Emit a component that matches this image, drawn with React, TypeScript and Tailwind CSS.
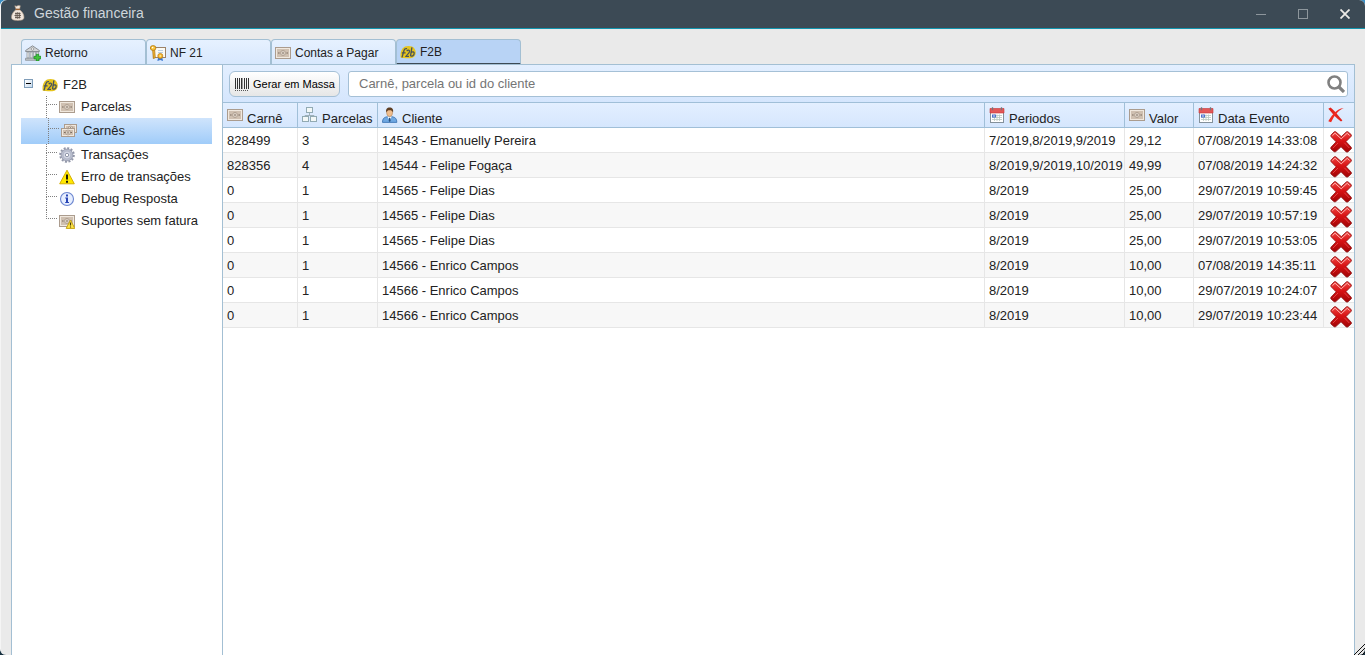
import React from "react";

type IconProps = { className?: string };

function Bill({ x, y, w, h }: { x: number; y: number; w: number; h: number }) {
  return (
    <g>
      <rect x={x + 0.5} y={y + 0.5} width={w - 1} height={h - 1} fill="#f0e8de" stroke="#ab9c8e" />
      <rect x={x + 2} y={y + 2} width={w - 4} height={h - 4} fill="#cfc0b1" />
      <ellipse cx={x + w / 2} cy={y + h / 2} rx="2.4" ry={Math.min(2.6, h / 3.6)} fill="#e4d9cd" stroke="#a09182" strokeWidth=".7" />
      <path d={`M${x + 3} ${y + h / 2}h1.6M${x + w - 4.6} ${y + h / 2}h1.6M${x + w / 2} ${y + h / 2 - 1.2}v2.4`} stroke="#7a6c60" />
    </g>
  );
}

function MoneyIcon({ className = "" }: IconProps) {
  return (
    <svg viewBox="0 0 16 16" className={`size-4 shrink-0 ${className}`} aria-hidden="true">
      <Bill x={0} y={2} w={16} h={12} />
    </svg>
  );
}

function MoneyStackIcon() {
  return (
    <svg viewBox="0 0 16 16" className="size-4 shrink-0" aria-hidden="true">
      <Bill x={3} y={1} w={13} h={9} />
      <Bill x={0} y={5} w={14} h={9} />
    </svg>
  );
}

function MoneyWarningIcon() {
  return (
    <svg viewBox="0 0 16 16" className="size-4 shrink-0" aria-hidden="true">
      <Bill x={0} y={2} w={16} h={12} />
      <path d="M11.5 7L15.8 15.4H7.2Z" fill="#ffe648" stroke="#c6a412" strokeLinejoin="round" />
      <path d="M11.5 9.5v3M11.5 13.4v1.2" stroke="#4a3c08" strokeWidth="1.2" />
    </svg>
  );
}

function F2bIcon() {
  return (
    <svg viewBox="0 0 16 16" className="size-4 shrink-0" aria-hidden="true">
      <path d="M2.5 4.5C4.5 1.8 9 1.4 12 2.6C15.2 4 16.5 8 15.3 10.9C14 14 10 14.5 6 14.2L.8 13.8C0 10 .8 7 2.5 4.5Z" fill="#e6c41c" />
      <path d="M2 13.4L4 6.5C4.4 5 5.3 4.4 7 4.7M1.8 8.9H5.6" fill="none" stroke="#47535c" strokeWidth="1.3" />
      <path d="M6.8 7.1C7.5 5.8 9.9 5.7 9.5 7.6C9.2 9.4 7 10.6 6 12.3H9" fill="none" stroke="#47535c" strokeWidth="1.2" />
      <path d="M11.9 3.4L10.5 12.2M11.2 8.4C12.6 7.2 14.6 7.9 14.1 9.8C13.7 11.8 11.8 12.6 10.6 11.9" fill="none" stroke="#47535c" strokeWidth="1.3" />
    </svg>
  );
}

function MoneyBagIcon() {
  return (
    <svg viewBox="0 0 16 16" className="size-4 shrink-0" aria-hidden="true">
      <path d="M4.8 .8L6.7 1.2L8.2 .4L10.3 .8L9.6 4.2H6.1Z" fill="#f3e9df" stroke="#b39c86" strokeWidth=".6" />
      <path d="M6 4.6C3.4 6.6 1.5 9.6 1.5 12C1.5 14.8 3.4 15.4 7.8 15.4S14 14.8 14 12C14 9.6 12.2 6.6 9.6 4.6Z" fill="#f0e6dc" stroke="#b39c86" strokeWidth=".6" />
      <path d="M5.6 4.4H10" stroke="#9c6233" strokeWidth="1.4" />
      <path d="M5 8.5h5.5M4.5 10.5h6.5M5 12.5h5.5M6 7.5v6M7.8 7v7M9.6 7.5v6" stroke="#62574e" strokeWidth=".9" />
    </svg>
  );
}

function BankIcon() {
  return (
    <svg viewBox="0 0 16 16" className="size-4 shrink-0" aria-hidden="true">
      <path d="M.6 5.5L7.5.8L14.4 5.5V6.5H.6Z" fill="#d3d6d8" stroke="#82878b" strokeWidth=".9" />
      <circle cx="7.5" cy="4" r="1.3" fill="#f1f3f4" stroke="#777" strokeWidth=".6" />
      <path d="M2 7h2v6H2zM5.2 7h2v6h-2zM8.4 7h2v6h-2zM11.6 7h2v6h-2z" fill="#eef0f1" stroke="#888d91" strokeWidth=".7" />
      <path d="M.5 13.3h14v2H.5z" fill="#c1c5c8" stroke="#82878b" strokeWidth=".7" />
      <path d="M11.3 9.3h2.4v2H16v2.5h-2.3V16h-2.4v-2.2H9v-2.5h2.3z" fill="#42c63a" stroke="#168a1e" strokeWidth=".7" />
    </svg>
  );
}

function CertificateIcon() {
  return (
    <svg viewBox="0 0 16 16" className="size-4 shrink-0" aria-hidden="true">
      <rect x="3.5" y="2.5" width="12" height="10" fill="#fbfaf4" stroke="#9c8268" />
      <path d="M8 5.5h5M8 7.5h5" stroke="#aac4dd" strokeWidth=".8" />
      <path d="M2.6 4.5L3.3 13.6L5.3 12.8L4.6 4.3" fill="#f1b533" stroke="#a96f0f" strokeWidth=".7" />
      <ellipse cx="3.1" cy="3" rx="2.8" ry="2.4" fill="#f8c53b" stroke="#b27612" strokeWidth=".8" />
      <circle cx="2.6" cy="2.6" r=".8" fill="#fff" />
      <path d="M8.2 12l-.8 4 2.8-1 2.8 1-.8-4z" fill="#3876d3" />
      <circle cx="10.3" cy="10.9" r="2.5" fill="#f5b931" stroke="#b87710" strokeWidth=".7" />
      <circle cx="10.3" cy="10.9" r=".9" fill="#ffe694" />
    </svg>
  );
}

function GearIcon() {
  return (
    <svg viewBox="0 0 16 16" className="size-4 shrink-0" aria-hidden="true">
      <circle cx="8" cy="8" r="6.8" fill="none" stroke="#9196a8" strokeWidth="2" strokeDasharray="2 1.56" />
      <circle cx="8" cy="8" r="5.9" fill="#b9bece" stroke="#9096a9" strokeWidth=".8" />
      <circle cx="8" cy="8" r="3.9" fill="#d5d9e6" stroke="#a2a8bb" strokeWidth=".6" />
      <circle cx="8" cy="8" r="1.7" fill="#fff" stroke="#878da2" strokeWidth=".9" />
    </svg>
  );
}

function WarningIcon() {
  return (
    <svg viewBox="0 0 16 16" className="size-4 shrink-0" aria-hidden="true">
      <path d="M8 1.2L15.3 14.8H.7Z" fill="#ffe800" stroke="#d5ad00" strokeLinejoin="round" />
      <path d="M8 5.5v5M8 11.7v2" stroke="#1c1a08" strokeWidth="2" />
    </svg>
  );
}

function InfoIcon() {
  return (
    <svg viewBox="0 0 16 16" className="size-4 shrink-0" aria-hidden="true">
      <circle cx="8" cy="8" r="6.5" fill="#e6eeff" stroke="#6b85cf" strokeWidth="1.1" />
      <path d="M7 3.5h2v2H7zM6.2 6.5H9V11h1v1H6.2v-1H7V7.5h-.8z" fill="#2946b5" />
    </svg>
  );
}

function TreeIcon() {
  return (
    <svg viewBox="0 0 16 16" className="size-4 shrink-0" aria-hidden="true">
      <path d="M7.5 5.5v3M3 10.5v-2h9v2" fill="none" stroke="#9fb1b9" />
      <g fill="#f3f8f7" stroke="#92aab3">
        <rect x="4.5" y=".5" width="6" height="5" />
        <rect x=".5" y="9.5" width="6" height="5" />
        <rect x="8.5" y="9.5" width="6" height="5" />
      </g>
    </svg>
  );
}

function UserIcon() {
  return (
    <svg viewBox="0 0 16 16" className="size-4 shrink-0" aria-hidden="true">
      <path d="M.5 15.4C.5 11.4 2.3 10.2 5.3 9.7H10C13 10.2 14.8 11.4 14.8 15.4Z" fill="#6fa8e2" stroke="#366fae" strokeWidth=".8" />
      <path d="M5.4 9.6L7.6 13L9.9 9.6Z" fill="#fff" />
      <path d="M7.1 10.7h1.1l.5 3.3-1 1-1-1z" fill="#2c527f" />
      <ellipse cx="7.6" cy="5.5" rx="3" ry="4" fill="#f0be8e" stroke="#a87444" strokeWidth=".5" />
      <path d="M4.2 5.5C3.6 2 5 .4 7.6.4S11.7 2 11 5.5C10.4 3.8 9.4 3.3 7.6 3.3S4.9 3.8 4.2 5.5Z" fill="#5e3d21" />
    </svg>
  );
}

function CalendarIcon() {
  return (
    <svg viewBox="0 0 16 16" className="size-4 shrink-0" aria-hidden="true">
      <rect x="1.5" y="2.5" width="13" height="13" fill="#fff" stroke="#84919b" />
      <path d="M1 1.5h14V6H1z" fill="#e45757" stroke="#c23838" strokeWidth=".6" />
      <path d="M3.5.3v3M12.5.3v3" stroke="#74767c" strokeWidth="1.3" />
      <path d="M3 8.5h10M3 10.5h10M3 12.5h10M5.5 7.5v6.5M8 7.5v6.5M10.5 7.5v6.5" stroke="#b8c8bf" strokeWidth=".8" />
      <path d="M3 7.5h4v3H3z" fill="#4a70cd" />
      <path d="M4.2 8.5h1.6v1H4.2z" fill="#fff" />
    </svg>
  );
}

function ScratchCrossIcon() {
  return (
    <svg viewBox="0 0 16 16" className="size-4 shrink-0" aria-hidden="true">
      <path d="M.3 1.8L2.6.6C5.4 3 7.4 5.2 9.6 7.7C11.4 9.8 12.8 11.4 14.4 13.4L13 14.5C11 12.9 8.7 11.2 6.6 8.9C4.3 6.4 2 3.6.3 1.8Z" fill="#e3241c" />
      <path d="M15.8 1C11.6 2.8 7.6 6.9 5.6 10.5C4.7 12.1 3.8 13.9 3.1 15.2L.3 14.3C1.9 11.5 3.2 9.3 5.2 7.2C8.4 3.7 12.1 1.1 15.8 1Z" fill="#f02b20" />
    </svg>
  );
}

function DeleteIcon() {
  return (
    <svg viewBox="0 0 22 22" className="size-[22px]" aria-hidden="true">
      <defs>
        <linearGradient id="crossRed" x1="0" y1="0" x2="0" y2="1">
          <stop offset="0" stopColor="#ee4a46" />
          <stop offset=".45" stopColor="#d81214" />
          <stop offset="1" stopColor="#a00406" />
        </linearGradient>
      </defs>
      <path
        d="M5.8.8L11.3 5.6L16.3.9Q17.2.2 18.2 1L21.2 3.6Q21.9 4.6 21 5.5L16 10.6L21.2 16.2Q21.9 17.2 21.1 18L18 20.8Q17 21.5 16 20.7L11 15.8L5.8 20.6Q4.8 21.3 3.8 20.5L1 18Q.3 17 1.1 16.1L6.1 10.8L1.1 5.7Q.4 4.7 1.2 3.8L4 1Q4.9.2 5.8.8Z"
        fill="url(#crossRed)"
        stroke="#8d1517"
        strokeWidth=".8"
      />
      <path d="M2.4 4.7L5 2.2L11.2 7.8L17.2 2.3L19.6 4.5" fill="none" stroke="#ffb3af" strokeWidth="1" />
      <path d="M2.8 17.2L8 12M19.3 17L14.4 11.8" stroke="#e85250" strokeWidth=".8" />
    </svg>
  );
}

function BarcodeIcon() {
  return (
    <svg viewBox="0 0 14 13" className="h-[13px] w-[14px] shrink-0" aria-hidden="true" shapeRendering="crispEdges">
      <path d="M0 0h1v11H0zM2 0h1v11H2zM4 0h1v11H4zM6 0h1v11H6zM9 0h1v11H9zM11 0h1v11h-1zM13 0h1v11h-1z" fill="#333" />
      <path d="M7 0h1v11H7z" fill="#999" />
      <path d="M0 12h1v1H0zM2 12h1v1H2zM4 12h1v1H4zM6 12h1v1H6zM8 12h1v1H8zM10 12h1v1h-1zM12 12h1v1h-1z" fill="#555" />
    </svg>
  );
}

function SearchIcon() {
  return (
    <svg viewBox="0 0 18 18" className="size-[18px]" aria-hidden="true">
      <circle cx="7.5" cy="7.5" r="6" fill="none" stroke="#808080" strokeWidth="2.6" />
      <path d="M12 12l5 5" stroke="#808080" strokeWidth="3.2" />
    </svg>
  );
}

const tabs = [
  { label: "Retorno", icon: <BankIcon /> },
  { label: "NF 21", icon: <CertificateIcon /> },
  { label: "Contas a Pagar", icon: <MoneyIcon /> },
  { label: "F2B", icon: <F2bIcon />, active: true },
];

const nodes = [
  { label: "Parcelas", icon: <MoneyIcon /> },
  { label: "Carnês", icon: <MoneyStackIcon />, active: true },
  { label: "Transações", icon: <GearIcon /> },
  { label: "Erro de transações", icon: <WarningIcon /> },
  { label: "Debug Resposta", icon: <InfoIcon /> },
  { label: "Suportes sem fatura", icon: <MoneyWarningIcon /> },
];

const columns = [
  { label: "Carnê", icon: <MoneyIcon />, width: "w-[75px]" },
  { label: "Parcelas", icon: <TreeIcon />, width: "w-20" },
  { label: "Cliente", icon: <UserIcon />, width: "" },
  { label: "Periodos", icon: <CalendarIcon />, width: "w-[140px]" },
  { label: "Valor", icon: <MoneyIcon />, width: "w-[69px]" },
  { label: "Data Evento", icon: <CalendarIcon />, width: "w-[130px]" },
];

const rows = [
  ["828499", "3", "14543 - Emanuelly Pereira", "7/2019,8/2019,9/2019", "29,12", "07/08/2019 14:33:08"],
  ["828356", "4", "14544 - Felipe Fogaça", "8/2019,9/2019,10/2019", "49,99", "07/08/2019 14:24:32"],
  ["0", "1", "14565 - Felipe Dias", "8/2019", "25,00", "29/07/2019 10:59:45"],
  ["0", "1", "14565 - Felipe Dias", "8/2019", "25,00", "29/07/2019 10:57:19"],
  ["0", "1", "14565 - Felipe Dias", "8/2019", "25,00", "29/07/2019 10:53:05"],
  ["0", "1", "14566 - Enrico Campos", "8/2019", "10,00", "07/08/2019 14:35:11"],
  ["0", "1", "14566 - Enrico Campos", "8/2019", "10,00", "29/07/2019 10:24:07"],
  ["0", "1", "14566 - Enrico Campos", "8/2019", "10,00", "29/07/2019 10:23:44"],
];

function TitleBar() {
  return (
    <header className="flex h-[29px] items-center justify-between rounded-t-md border-b border-[#1295ae] bg-[#3c4a55] pr-3 pl-[9px]">
      <h1 className="flex items-center gap-2 pb-[2px] text-sm leading-5 text-[#cfd6db]">
        <MoneyBagIcon />
        Gestão financeira
      </h1>
      <div className="flex items-center gap-[26px]">
        <button type="button" aria-label="Minimizar" className="flex size-4 items-center justify-center">
          <span className="h-px w-[10px] bg-[#8d969c]" />
        </button>
        <button type="button" aria-label="Maximizar" className="flex size-4 items-center justify-center">
          <span className="size-[10px] border border-[#8d969c]" />
        </button>
        <button type="button" aria-label="Fechar" className="flex size-4 items-center justify-center">
          <svg viewBox="0 0 10 10" className="size-[10px]" aria-hidden="true">
            <path d="M.5.5l9 9M9.5.5l-9 9" stroke="#eceae6" strokeWidth="1.8" />
          </svg>
        </button>
      </div>
    </header>
  );
}

function Sidebar() {
  return (
    <nav aria-label="F2B" className="w-[211px] shrink-0 border-r border-[#a3bfd3] bg-white pt-[9px] pr-[10px] pl-[9px] text-[13px]">
      <div className="flex h-[22px] items-center pl-[3px]">
        <button
          type="button"
          aria-label="Recolher F2B"
          className="mr-[9px] mb-1 flex size-[9px] items-center justify-center border border-[#7f9db9] bg-gradient-to-br from-white to-[#c8dbee]"
        >
          <span className="h-px w-[5px] bg-black" />
        </button>
        <a href="#f2b" className="flex items-center gap-[5px] leading-5 text-[#222]">
          <F2bIcon />
          F2B
        </a>
      </div>
      <ul>
        {nodes.map((node, i) => (
          <li key={node.label}>
            <a
              href={`#${i}`}
              aria-current={node.active ? "page" : undefined}
              className={`flex items-stretch text-[#222] ${
                node.active ? "h-[26px] bg-gradient-to-b from-[#cfe4fc] to-[#a0ccf9] pl-[27px]" : "h-[22px] pl-[25px]"
              }`}
            >
              <span className="mr-[2px] flex w-[11px] flex-col">
                <span className={`border-b border-l border-dotted border-[#808080] ${node.active ? "h-[11px]" : "h-[9px]"}`} />
                {i < nodes.length - 1 && <span className="flex-1 border-l border-dotted border-[#808080]" />}
              </span>
              <span className={`flex items-center gap-[6px] leading-5 ${node.active ? "" : "pb-[1px]"}`}>
                {node.icon}
                {node.label}
              </span>
            </a>
          </li>
        ))}
      </ul>
    </nav>
  );
}

function Toolbar() {
  return (
    <div className="flex h-[38px] items-center gap-2 border-b border-[#a0bfd8] bg-gradient-to-b from-[#e3efff] to-[#d5e6fd] px-[6px]">
      <button
        type="button"
        className="flex h-[26px] w-[111px] shrink-0 items-center gap-1 rounded-md border border-[#a5c0d6] bg-gradient-to-b from-white to-[#e6e6e6] pt-[2px] pl-[5px] text-[11px] whitespace-nowrap text-black"
      >
        <BarcodeIcon />
        Gerar em Massa
      </button>
      <div className="flex h-[26px] flex-1 items-center rounded-[3px] border border-[#a5c0d6] bg-white pr-[2px]">
        <input
          type="text"
          aria-label="Buscar"
          placeholder="Carnê, parcela ou id do cliente"
          className="h-full min-w-0 flex-1 bg-transparent px-[10px] text-[13px] outline-none placeholder:text-[#757575]"
        />
        <button type="button" aria-label="Pesquisar">
          <SearchIcon />
        </button>
      </div>
    </div>
  );
}

function CarnesTable() {
  return (
    <table className="w-full table-fixed border-separate border-spacing-0 text-[13px] text-[#222]">
      <thead>
        <tr className="bg-gradient-to-b from-[#e3efff] to-[#d5e6fd]">
          {columns.map((c) => (
            <th key={c.label} scope="col" className={`border-r border-b border-[#a0bfd8] px-1 py-0 text-left font-normal ${c.width}`}>
              <span className="flex h-6 items-end gap-1 leading-4">
                <span className="mb-1">{c.icon}</span>
                {c.label}
              </span>
            </th>
          ))}
          <th scope="col" aria-label="Excluir" className="w-[30px] border-b border-[#a0bfd8] py-0 pr-0 pl-1">
            <span className="flex h-6 items-center">
              <ScratchCrossIcon />
            </span>
          </th>
        </tr>
      </thead>
      <tbody>
        {rows.map((row, r) => (
          <tr key={r} className="odd:bg-white even:bg-[#f7f7f7]">
            {row.map((cell, i) => (
              <td key={i} className="h-[25px] border-r border-b border-[#e6e6e6] pt-[2px] pr-0 pb-0 pl-1 leading-5 whitespace-nowrap">
                {cell}
              </td>
            ))}
            <td className="h-[25px] border-b border-[#e6e6e6] p-0">
              <button type="button" aria-label="Excluir" className="mt-[3px] -mb-px ml-[6px] flex">
                <DeleteIcon />
              </button>
            </td>
          </tr>
        ))}
      </tbody>
    </table>
  );
}

export default function App() {
  return (
    <div className="min-h-screen bg-gradient-to-b from-[#3c8fc4] to-[#16303f] font-['Liberation_Sans',Arial,sans-serif]">
      <div className="relative flex min-h-screen flex-col rounded-md border-l border-[#f5f5f5] bg-[#eaeaea]">
        <TitleBar />
        <main className="flex flex-1 flex-col px-[10px] pt-[10px]">
          <div role="tablist" className="flex pl-[10px]">
            {tabs.map((tab) => (
              <button
                key={tab.label}
                type="button"
                role="tab"
                aria-selected={Boolean(tab.active)}
                className={`flex w-[125px] items-center gap-1 rounded-t-[4px] border border-[#a3bfd3] pl-[3px] text-xs text-[#222] ${
                  tab.active ? "-mb-px h-[26px] border-b-2 border-b-[#3c4a55] bg-[#b8d3f5]" : "h-[25px] border-b-0 bg-gradient-to-b from-[#e6f1ff] to-[#d8e8fd] pt-[2px]"
                }`}
              >
                {tab.icon}
                {tab.label}
              </button>
            ))}
          </div>
          <div className="flex flex-1 border border-b-0 border-[#a3bfd3] bg-white">
            <Sidebar />
            <section className="min-w-0 flex-1">
              <Toolbar />
              <CarnesTable />
            </section>
          </div>
        </main>
        <svg viewBox="0 0 11 11" className="absolute right-0 bottom-0 size-[11px] cursor-se-resize" aria-hidden="true">
          <path d="M0 11L11 0M4 11L11 4M8 11L11 8" stroke="#111" />
        </svg>
      </div>
    </div>
  );
}
